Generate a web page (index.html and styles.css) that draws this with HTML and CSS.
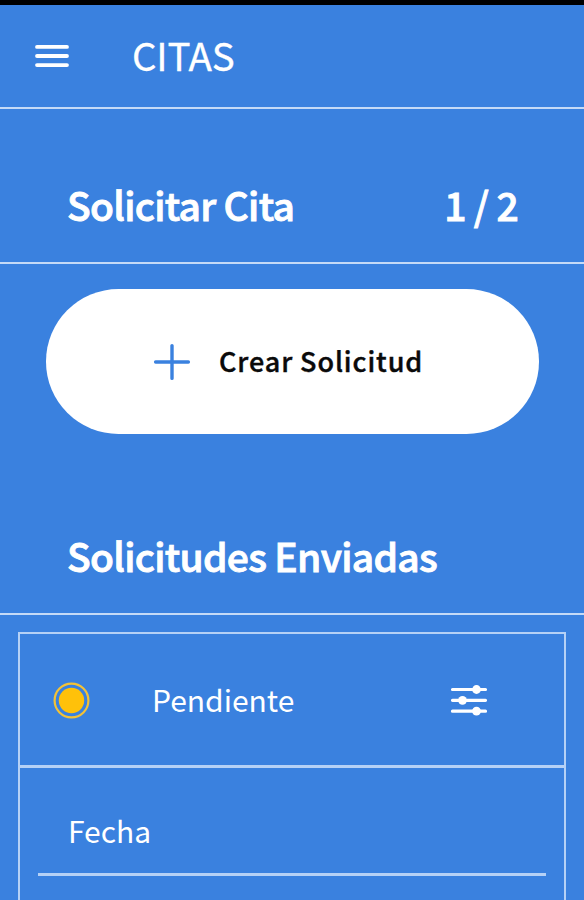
FILE: index.html
```html
<!DOCTYPE html>
<html lang="es">
<head>
    <meta charset="UTF-8">
    <meta name="viewport" content="width=device-width, initial-scale=1.0">
    <title>Citas</title>
    <link rel="stylesheet" href="styles.css">
</head>
<body>

    <!-- Navbar -->
    <header class="navbar">
        <svg class="menu-icon" width="34" height="24" viewBox="0 0 34 24" stroke="#fff" stroke-width="3.8" stroke-linecap="round">
            <path d="M2 2.9h30M2 12h30M2 21.1h30"/>
        </svg>
        <h1>CITAS</h1>
    </header>

    <!-- Request Section -->
    <div class="section-title">
        <h2>Solicitar Cita</h2>
        <span class="counter">1 / 2</span>
    </div>

    <button class="create-btn" type="button">
        <svg width="38" height="38" viewBox="0 0 38 38" stroke="#3a81df" stroke-width="3.4" stroke-linecap="round">
            <path d="M19 2.6v32.8M2.6 19h32.8"/>
        </svg>
        <span>Crear Solicitud</span>
    </button>

    <!-- Sent Requests Section -->
    <div class="section-title sent">
        <h2>Solicitudes Enviadas</h2>
    </div>

    <div class="card">
        <div class="card-header">
            <svg class="status-icon" width="38" height="38" viewBox="0 0 38 38">
                <circle cx="19.5" cy="19.5" r="16.9" fill="none" stroke="#f3c236" stroke-width="2.2"/>
                <circle cx="19.5" cy="19.5" r="12.7" fill="#ffc10a"/>
            </svg>
            <span class="status">Pendiente</span>
            <svg class="filter-icon" width="38" height="32" viewBox="0 0 38 32" fill="#fff">
                <path d="M2.5 5.5h33M2.5 16.3h33M2.5 27.2h33" stroke="#fff" stroke-width="3.2" stroke-linecap="round"/>
                <circle cx="26.5" cy="5.5" r="4.4"/>
                <circle cx="12.5" cy="16.3" r="4.4"/>
                <circle cx="26.5" cy="27.2" r="4.4"/>
            </svg>
        </div>
        <div class="field">Fecha</div>
        <div class="value">2 2</div>
    </div>

</body>
</html>
```

FILE: styles.css
```css
/* General Styles */
* {
    box-sizing: border-box;
}

body {
    font-family: "Noto Sans CJK SC", "Noto Sans", sans-serif;
    margin: 0;
    height: 900px;
    background: #3a81df;
    color: #ffffff;
    overflow: hidden;
    border-top: 5px solid #000;
}

h1, h2 {
    margin: 0;
}

svg {
    flex: none;
}

/* Navbar Styles */
.navbar {
    display: flex;
    align-items: center;
    height: 104px;
    padding-left: 35px;
    border-bottom: 2px solid #c4daf7;
}

.navbar h1 {
    margin-left: 63px;
    padding-bottom: 4px;
    font-size: 38.5px;
    font-weight: 400;
    line-height: 56px;
    letter-spacing: -0.2px;
    -webkit-text-stroke: 0.3px #ffffff;
}

/* Section Titles */
.section-title {
    display: flex;
    justify-content: space-between;
    align-items: flex-end;
    height: 155px;
    padding: 0 66px 29px 67px;
    border-bottom: 2px solid #c4daf7;
    font-size: 39px;
    font-weight: 500;
    line-height: 58px;
    letter-spacing: -0.7px;
    -webkit-text-stroke: 0.9px #ffffff;
}

.section-title h2 {
    font-size: inherit;
    font-weight: inherit;
}

.create-btn {
    display: flex;
    align-items: center;
    width: 493px;
    height: 145px;
    margin: 25px 0 0 46px;
    padding: 0 0 0 107px;
    background: #ffffff;
    color: #0a0a0a;
    border: none;
    border-radius: 73px;
    font-family: inherit;
    font-size: 27px;
    font-weight: 500;
    letter-spacing: 0.9px;
    cursor: pointer;
}

.create-btn span {
    margin-left: 28px;
    padding-bottom: 2px;
    -webkit-text-stroke: 0.4px #0a0a0a;
}

.sent {
    height: 181px;
}

/* Request Card */
.card {
    width: 548px;
    height: 300px;
    margin: 17px 0 0 18px;
    border: 2px solid #b5d1f6;
    font-size: 30px;
}

.card-header {
    display: flex;
    align-items: center;
    height: 134px;
    padding-left: 32px;
    border-bottom: 3px solid #b5d1f6;
}

.status {
    width: 240px;
    margin-left: 62px;
    padding-bottom: 1px;
}

.filter-icon {
    margin-left: 58px;
}

.field {
    height: 108px;
    margin: 0 18px;
    padding: 39px 0 0 30px;
    border-bottom: 3px solid #b5d1f6;
    line-height: 46px;
}

.value {
    padding: 11px 0 0 49px;
    line-height: 44px;
}
```
